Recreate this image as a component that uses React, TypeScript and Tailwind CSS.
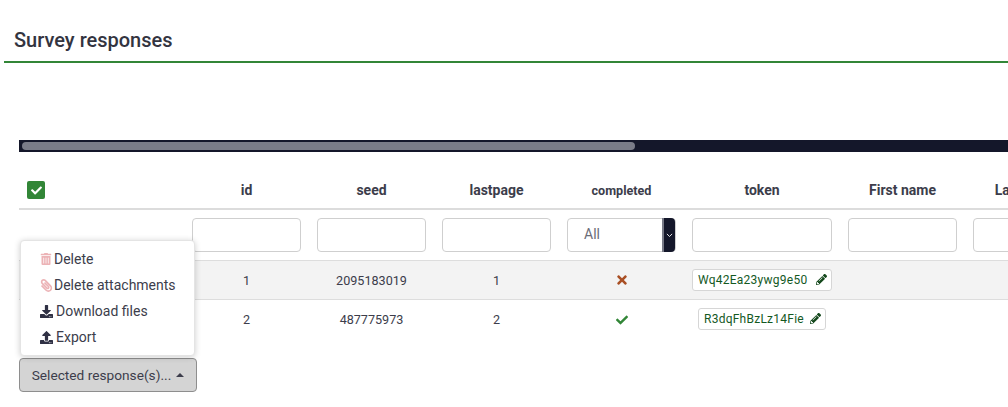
import { FaCheck, FaDownload, FaPaperclip, FaPencilAlt, FaTimes, FaTrashAlt, FaUpload } from 'react-icons/fa'

const filterInput = 'block h-[34px] w-full rounded-[4px] border border-[#cfcfcf] bg-white'

function TokenChip({ token, width }: { token: string; width: string }) {
  return (
    <span className={`inline-flex h-[22px] items-center justify-between rounded-[3px] border border-[#d6d6d6] bg-white pl-[5px] pr-[4px] text-[12px] tracking-[0.25px] text-[#14591f] ${width}`}>
      {token}
      <FaPencilAlt className="size-[11px] text-[#14481c]" />
    </span>
  )
}

function MenuItem({ icon, label, faded = false }: { icon: React.ReactNode; label: string; faded?: boolean }) {
  return (
    <li className="flex h-[26px] items-center pl-[19px]">
      <span className={`flex items-center ${faded ? 'w-[14px] text-[#ecb3b6]' : 'w-[16px] text-[#2f3044]'}`}>{icon}</span>
      <span>{label}</span>
    </li>
  )
}

export default function App() {
  return (
    <main className="h-[407px] w-[1008px] overflow-hidden bg-white text-[14px] text-[#3c3d4b] [font-family:Roboto,sans-serif]">
      <header className="ml-[4px] h-[63px] border-b-2 border-[#328637] pl-[10px] pt-[27px]">
        <h1 className="text-[20px] leading-[26px] font-medium text-[#33343f]">Survey responses</h1>
      </header>

      <section className="ml-[19px] pt-[77px]">
        <div className="h-[12px] bg-[#14172a] py-[2px] pl-[3px]">
          <div className="h-[8px] w-[613px] rounded-full bg-[#7a7c88]" />
        </div>

        <table className="w-[1071px] table-fixed border-collapse">
          <colgroup>
            <col className="w-[165px]" />
            <col className="w-[125px]" />
            <col className="w-[125px]" />
            <col className="w-[125px]" />
            <col className="w-[125px]" />
            <col className="w-[156px]" />
            <col className="w-[125px]" />
            <col className="w-[125px]" />
          </colgroup>
          <thead>
            <tr className="h-[57px] border-b-2 border-[#dcdcdc] text-center align-bottom font-bold">
              <th className="pb-[9px] pl-[8px] text-left">
                <span className="flex size-[18px] items-center justify-center rounded-[2px] bg-[#328637] text-white">
                  <FaCheck className="size-[11px]" />
                </span>
              </th>
              <th className="pb-[7px]">id</th>
              <th className="pb-[7px]">seed</th>
              <th className="pb-[7px]">lastpage</th>
              <th className="pb-[7px] text-[12.6px]">completed</th>
              <th className="pb-[7px]">token</th>
              <th className="pb-[7px]">First name</th>
              <th className="pb-[7px]">Last name</th>
            </tr>
          </thead>
          <tbody>
            <tr className="h-[51px] border-b border-[#dddddd]">
              <td />
              <td className="px-[8px]"><input className={filterInput} /></td>
              <td className="px-[8px]"><input className={filterInput} /></td>
              <td className="px-[8px]"><input className={filterInput} /></td>
              <td className="px-[8px]">
                <div className={`${filterInput} relative flex items-center pl-[16px] text-[#6b6c78]`}>
                  All
                  <span className="absolute top-[-1px] right-0 flex h-[34px] w-[13px] items-center justify-center rounded-r-[4px] border-l-2 border-[#777986] bg-[#14172a]">
                    <svg viewBox="0 0 8 5" className="w-[7px] text-white" fill="none" stroke="currentColor">
                      <path d="M1 1l3 3 3-3" />
                    </svg>
                  </span>
                </div>
              </td>
              <td className="px-[8px]"><input className={filterInput} /></td>
              <td className="px-[8px]"><input className={filterInput} /></td>
              <td className="px-[8px]"><input className={filterInput} /></td>
            </tr>
            <tr className="h-[39px] border-b border-[#dddddd] bg-[#f3f3f3] text-center text-[12.6px]">
              <td />
              <td className="pt-[3px]">1</td>
              <td className="pt-[3px]">2095183019</td>
              <td className="pt-[3px]">1</td>
              <td className="pt-[1px]"><FaTimes className="mx-auto size-[14px] text-[#a94f24]" /></td>
              <td><TokenChip token="Wq42Ea23ywg9e50" width="w-[140px]" /></td>
              <td />
              <td />
            </tr>
            <tr className="h-[39px] text-center text-[12.6px]">
              <td />
              <td className="pt-[3px]">2</td>
              <td className="pt-[3px]">487775973</td>
              <td className="pt-[3px]">2</td>
              <td className="pt-[2px]"><FaCheck className="mx-auto size-[12px] text-[#328637]" /></td>
              <td><TokenChip token="R3dqFhBzLz14Fie" width="w-[128px]" /></td>
              <td />
              <td />
            </tr>
          </tbody>
        </table>

        <div className="relative mt-[20px] w-[178px]">
          <ul className="absolute bottom-[calc(100%+2px)] left-[1px] w-[175px] rounded-[4px] border border-[#e4e4e4] bg-white py-[5px] shadow-[0_1px_6px_rgba(0,0,0,0.2)]">
            <MenuItem faded icon={<FaTrashAlt className="size-[12px]" />} label="Delete" />
            <MenuItem faded icon={<FaPaperclip className="size-[13px] -scale-x-100" />} label="Delete attachments" />
            <MenuItem icon={<FaDownload className="size-[13px]" />} label="Download files" />
            <MenuItem icon={<FaUpload className="size-[13px]" />} label="Export" />
          </ul>
          <button className="flex h-[34px] w-[178px] items-center justify-center gap-[5px] rounded-[4px] border border-[#8e8e8e] bg-[#d4d4d4] text-[13.7px]">
            Selected response(s)...
            <svg viewBox="0 0 8 4" className="w-[8px] fill-current"><path d="M0 4l4-4 4 4z" /></svg>
          </button>
        </div>
      </section>
    </main>
  )
}
